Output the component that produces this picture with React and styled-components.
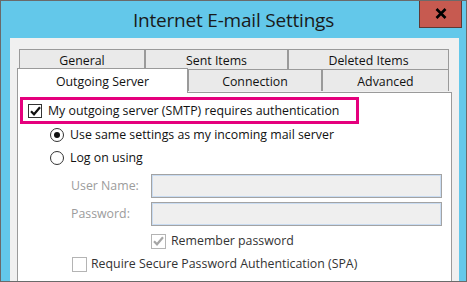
import React from 'react';
import styled, { createGlobalStyle } from 'styled-components';

const GlobalStyle = createGlobalStyle`
  html, body {
    margin: 0;
    padding: 0;
    background: #ffffff;
  }
  body {
    font-family: "Open Sans", "Noto Sans", sans-serif;
  }
`;

const Frame = styled.div`
  width: 467px;
  height: 282px;
  box-sizing: border-box;
  border: 1px solid #6a6a6a;
  background: #63c8ea;
  display: flex;
  flex-direction: column;
  overflow: hidden;
`;

const TitleBar = styled.div`
  height: 37px;
  display: grid;
  grid-template-columns: 1fr auto 1fr;
  align-items: start;
`;

const Title = styled.div`
  grid-column: 2;
  padding-top: 6px;
  font-size: 19px;
  color: #1a1a1a;
  letter-spacing: -0.2px;
`;

const CloseButton = styled.div`
  grid-column: 3;
  justify-self: end;
  margin-right: 4px;
  margin-top: -1px;
  width: 43px;
  height: 28px;
  box-sizing: border-box;
  background: #c75a50;
  border: 1px solid #5e3a36;
  border-top: none;
  display: flex;
  align-items: center;
  justify-content: center;
`;

const Client = styled.div`
  flex: 1;
  margin: 0 7px 0 9px;
  background: #f0f0f0;
  padding: 11px 7px 0 7px;
  display: flex;
  flex-direction: column;
`;

const TabRow = styled.div`
  display: flex;
  margin: 0 2px;
  position: relative;
  z-index: ${p => p.$front ? 2 : 1};
`;

const Tab = styled.div`
  width: ${p => p.$w}px;
  height: ${p => p.$h || 20}px;
  box-sizing: border-box;
  border: 1px solid #9a9a9a;
  border-bottom: none;
  background: #eaeaea;
  font-size: 12.35px;
  line-height: 16px;
  color: #111;
  display: flex;
  justify-content: center;
  align-items: center;
  padding-top: ${p => p.$pt || 2}px;
`;

const ActiveTab = styled(Tab)`
  background: #ffffff;
  margin-left: -2px;
  margin-top: -1px;
  height: 25px;
  margin-bottom: -1px;
`;

const Panel = styled.div`
  flex: 1;
  background: #ffffff;
  border: 1px solid #9a9a9a;
  border-bottom: none;
  padding: 4px 0 0 2px;
  display: flex;
  flex-direction: column;
  align-items: flex-start;
  font-size: 12.35px;
  line-height: 16px;
  color: #111;
`;

const Highlight = styled.div`
  width: 339px;
  height: 27px;
  box-sizing: border-box;
  border: 3px solid #e5007d;
  display: flex;
  align-items: center;
  padding-left: 5px;
  gap: 6px;
`;

const Box = styled.div`
  width: ${p => p.$size}px;
  height: ${p => p.$size}px;
  box-sizing: border-box;
  border: 1px solid ${p => p.$disabled ? '#b4b4b4' : '#333'};
  background: #fff;
  display: flex;
  align-items: center;
  justify-content: center;
  flex-shrink: 0;
`;

const Row = styled.div`
  display: flex;
  align-items: center;
  height: 16px;
  gap: ${p => p.$gap || 6}px;
  margin-left: ${p => p.$indent}px;
  margin-top: ${p => p.$top}px;
  color: ${p => p.$muted ? '#333' : '#111'};
`;

const Radio = styled.div`
  width: 14px;
  height: 14px;
  box-sizing: border-box;
  border: 1px solid #333;
  border-radius: 50%;
  background: #fff;
  display: flex;
  align-items: center;
  justify-content: center;
  &::after {
    content: '';
    display: ${p => p.$on ? 'block' : 'none'};
    width: 6px;
    height: 6px;
    border-radius: 50%;
    background: #111;
  }
`;

const FieldRow = styled.div`
  display: flex;
  align-items: center;
  margin-left: 51px;
  margin-top: ${p => p.$top}px;
`;

const Label = styled.div`
  width: 80px;
  color: #9c9c9c;
`;

const Field = styled.div`
  width: 291px;
  height: 24px;
  box-sizing: border-box;
  border: 1px solid #a3a3a3;
  box-shadow: inset 0 0 0 1px #c9dcf2;
  background: #efefef;
`;

const Check = ({ color }) => (
  <svg width="11" height="10" viewBox="0 0 11 10">
    <path d="M1 5.2 L4 8.3 L10 1.2" fill="none" stroke={color} strokeWidth="2.2" />
  </svg>
);

export default function App() {
  return (
    <>
      <GlobalStyle />
      <Frame>
        <TitleBar>
          <Title>Internet E-mail Settings</Title>
          <CloseButton>
            <svg width="12" height="11" viewBox="0 0 12 11">
              <path d="M1.5 1 L10.5 10 M10.5 1 L1.5 10" stroke="#000" strokeWidth="2.6" />
            </svg>
          </CloseButton>
        </TitleBar>
        <Client>
          <TabRow>
            <Tab $w={126} $pt={3}>General</Tab>
            <Tab $w={143} $pt={3}>Sent Items</Tab>
            <Tab $w={161} $pt={3}>Deleted Items</Tab>
          </TabRow>
          <TabRow $front>
            <ActiveTab $w={171} $pt={0}>Outgoing Server</ActiveTab>
            <Tab $w={134} $h={22} $pt={3}>Connection</Tab>
            <Tab $w={127} $h={22} $pt={3}>Advanced</Tab>
          </TabRow>
          <Panel>
            <Highlight>
              <Box $size={14}><Check color="#111" /></Box>
              <span>My outgoing server (SMTP) requires authentication</span>
            </Highlight>
            <Row $indent={30} $top={3}>
              <Radio $on />
              <span>Use same settings as my incoming mail server</span>
            </Row>
            <Row $indent={30} $top={7}>
              <Radio />
              <span>Log on using</span>
            </Row>
            <FieldRow $top={8}>
              <Label>User Name:</Label>
              <Field />
            </FieldRow>
            <FieldRow $top={4}>
              <Label>Password:</Label>
              <Field />
            </FieldRow>
            <Row $indent={131} $top={7} $gap={5} $muted>
              <Box $size={15} $disabled><Check color="#a6a6a6" /></Box>
              <span>Remember password</span>
            </Row>
            <Row $indent={52} $top={7} $gap={4} $muted>
              <Box $size={15} $disabled />
              <span>Require Secure Password Authentication (SPA)</span>
            </Row>
          </Panel>
        </Client>
      </Frame>
    </>
  );
}
